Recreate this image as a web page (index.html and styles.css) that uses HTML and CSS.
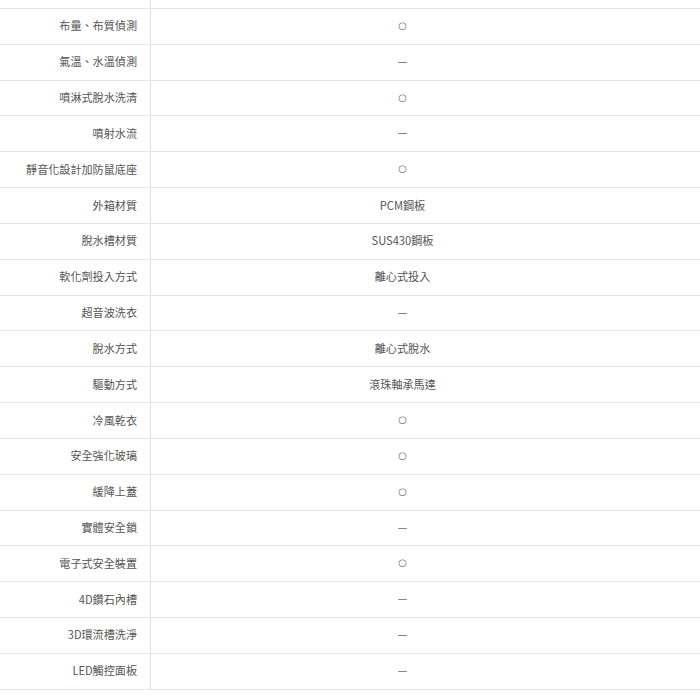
FILE: index.html
```html
<!DOCTYPE html>
<html lang="zh-Hant">
<head>
<meta charset="utf-8">
<link rel="stylesheet" href="styles.css">
</head>
<body>
<div class="spec">
  <div class="row lead"><div class="label"></div><div class="value"></div></div>
  <div class="row"><div class="label">布量、布質偵測</div><div class="value"><span class="mark">○</span></div></div>
  <div class="row"><div class="label">氣溫、水溫偵測</div><div class="value"><span class="dash">－</span></div></div>
  <div class="row"><div class="label">噴淋式脫水洗清</div><div class="value"><span class="mark">○</span></div></div>
  <div class="row"><div class="label">噴射水流</div><div class="value"><span class="dash">－</span></div></div>
  <div class="row"><div class="label">靜音化設計加防鼠底座</div><div class="value"><span class="mark">○</span></div></div>
  <div class="row"><div class="label">外箱材質</div><div class="value">PCM鋼板</div></div>
  <div class="row"><div class="label">脫水槽材質</div><div class="value">SUS430鋼板</div></div>
  <div class="row"><div class="label">軟化劑投入方式</div><div class="value">離心式投入</div></div>
  <div class="row"><div class="label">超音波洗衣</div><div class="value"><span class="dash">－</span></div></div>
  <div class="row"><div class="label">脫水方式</div><div class="value">離心式脫水</div></div>
  <div class="row"><div class="label">驅動方式</div><div class="value">滾珠軸承馬達</div></div>
  <div class="row"><div class="label">冷風乾衣</div><div class="value"><span class="mark">○</span></div></div>
  <div class="row"><div class="label">安全強化玻璃</div><div class="value"><span class="mark">○</span></div></div>
  <div class="row"><div class="label">緩降上蓋</div><div class="value"><span class="mark">○</span></div></div>
  <div class="row"><div class="label">實體安全鎖</div><div class="value"><span class="dash">－</span></div></div>
  <div class="row"><div class="label">電子式安全裝置</div><div class="value"><span class="mark">○</span></div></div>
  <div class="row"><div class="label">4D鑽石內槽</div><div class="value"><span class="dash">－</span></div></div>
  <div class="row"><div class="label">3D環流槽洗淨</div><div class="value"><span class="dash">－</span></div></div>
  <div class="row last"><div class="label">LED觸控面板</div><div class="value"><span class="dash">－</span></div></div>
</div>
</body>
</html>
```
FILE: styles.css
```css
html, body {
  margin: 0;
  padding: 0;
  background: #fff;
}
body {
  font-family: "Noto Sans CJK TC", "Noto Sans", sans-serif;
  font-size: 11.1px;
  color: #555;
}
.spec {
  display: flex;
  flex-direction: column;
}
.row {
  display: grid;
  grid-template-columns: 151px 1fr;
  height: 35.84px;
  box-sizing: border-box;
  border-top: 1px solid #e6e6e6;
}
.row.lead {
  height: 8px;
  border-top: none;
}
.row.last {
  border-bottom: 1px solid #e6e6e6;
  height: 36.84px;
}
.label {
  border-right: 1px solid #ddd;
  padding-right: 13px;
  padding-bottom: 2px;
  display: flex;
  align-items: center;
  justify-content: flex-end;
}
.value {
  display: flex;
  align-items: center;
  justify-content: center;
  padding-right: 46px;
  padding-bottom: 2px;
}
.mark {
  font-family: "DejaVu Sans", sans-serif;
  font-size: 10px;
  color: #666;
}
.dash {
  font-size: 12px;
  color: #666;
}
```
